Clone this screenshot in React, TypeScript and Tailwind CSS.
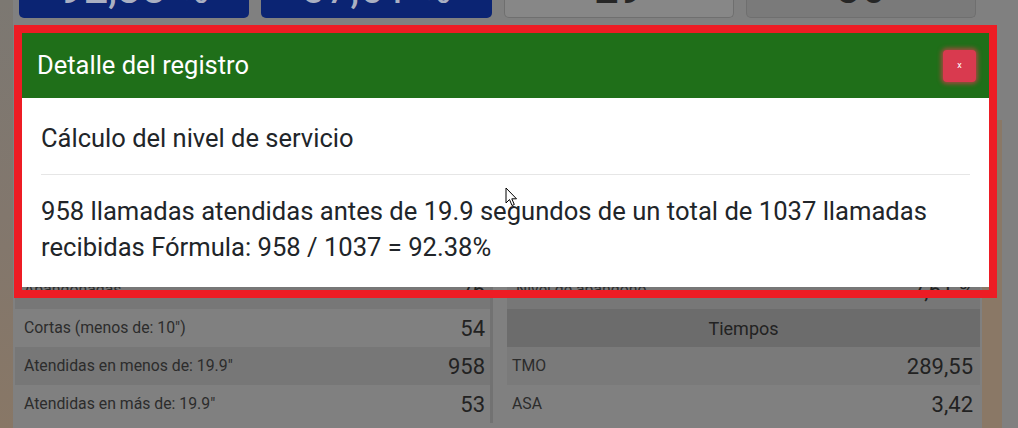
import React from 'react';

const leftRows = [
  { label: 'Recibidas', value: '1037' },
  { label: 'Atendidas', value: '1011' },
  { label: 'Atendidas (%)', value: '97,49 %' },
  { label: 'Transferidas', value: '12' },
  { label: 'En cola', value: '0' },
  { label: 'Abandonadas', value: '76' },
  { label: 'Cortas (menos de: 10")', value: '54' },
  { label: 'Atendidas en menos de: 19.9"', value: '958' },
  { label: 'Atendidas en más de: 19.9"', value: '53' },
];

const rightRows = [
  { label: 'Nivel de servicio', value: '92,38 %' },
  { label: 'Nivel de atención', value: '97,49 %' },
  { label: 'Llamadas perdidas', value: '26' },
  { label: 'Llamadas cortas', value: '54' },
  { label: 'Reintentos', value: '3' },
  { label: 'Nivel de abandono', value: '7,61 %' },
];

const rowBg = ['bg-[#808080]', 'bg-[#777777]'];

function Row({ label, value, index }: { label: string; value: string; index: number }) {
  return (
    <div className={`flex h-[38px] items-center justify-between pl-[9px] pr-[5px] ${rowBg[index % 2]}`}>
      <span className="text-[15.8px] text-[#2c2c2c]">{label}</span>
      <span className="text-[22px] text-[#222222]">{value}</span>
    </div>
  );
}

export default function App() {
  return (
    <div className="relative flex h-[428px] w-[1018px] overflow-hidden bg-[#808080] font-['Roboto',sans-serif]">
      {/* background page, dimmed by the modal */}
      <div className="w-[13px] shrink-0 bg-gradient-to-b from-[#7c7872] via-[#82776d] to-[#887766]" />
      <div className="w-[969px] shrink-0 bg-[#808080]">
        <div className="grid grid-cols-4 gap-[12px] px-[6px]">
          <div className="h-[18px] overflow-hidden rounded-b-[5px] bg-[#0b2473] text-center">
            <div className="-mt-[34px] text-[44px] leading-none text-[#aab0c2]">92,38 %</div>
          </div>
          <div className="h-[18px] overflow-hidden rounded-b-[5px] bg-[#0b2473] text-center">
            <div className="-mt-[34px] text-[44px] leading-none text-[#aab0c2]">07,61 %</div>
          </div>
          <div className="h-[18px] overflow-hidden rounded-b-[5px] border border-t-0 border-[#6f6f6f] bg-[#878787] text-center">
            <div className="-mt-[34px] text-[44px] leading-none text-[#262626]">29</div>
          </div>
          <div className="h-[18px] overflow-hidden rounded-b-[5px] border border-t-0 border-[#6f6f6f] bg-[#7a7a7a] text-center">
            <div className="-mt-[34px] text-[44px] leading-none text-[#262626]">36</div>
          </div>
        </div>

        <div className="mt-[25px] grid grid-cols-[478px_1fr] gap-[14px] px-[2px]">
          <div className="border-r-[3px] border-[#727272]">
            <div className="flex h-[38px] items-center justify-center bg-[#6c6c6c] text-[18px] text-[#222222]">
              Llamadas
            </div>
            {leftRows.map((r, i) => (
              <Row key={r.label} label={r.label} value={r.value} index={i} />
            ))}
          </div>
          <div>
            <div className="flex h-[38px] items-center justify-center bg-[#6c6c6c] text-[18px] text-[#222222]">
              Niveles
            </div>
            {rightRows.map((r, i) => (
              <Row key={r.label} label={r.label} value={r.value} index={i} />
            ))}
            <div className="flex h-[38px] items-center justify-center bg-[#6c6c6c] text-[18px] text-[#222222]">
              Tiempos
            </div>
            <div className="flex h-[38px] items-center justify-between bg-[#7a7a7a] pl-[5px] pr-[7px]">
              <span className="text-[15.8px] text-[#2c2c2c]">TMO</span>
              <span className="text-[22px] text-[#222222]">289,55</span>
            </div>
            <div className="flex h-[38px] items-center justify-between bg-[#808080] pl-[5px] pr-[7px]">
              <span className="text-[15.8px] text-[#2c2c2c]">ASA</span>
              <span className="text-[22px] text-[#222222]">3,42</span>
            </div>
          </div>
        </div>
      </div>
      <div className="flex w-[36px] shrink-0">
        <div className="mt-[120px] w-[20px] bg-[#8a7866]" />
        <div className="flex-1 bg-[#808080]" />
      </div>

      {/* red highlight frame */}
      <div className="absolute left-[14px] top-[25px] h-[273px] w-[983px] border-[8px] border-[#ed1c24]" />

      {/* modal */}
      <div className="absolute left-[22px] top-[33px] w-[967px] bg-white">
        <div className="flex h-[65px] items-center justify-between bg-[#1f6f19] pl-[15px] pr-[13px]">
          <h4 className="text-[25.5px] leading-[33px] text-white">Detalle del registro</h4>
          <button className="flex h-[32px] w-[33px] items-center justify-center rounded-[4px] bg-[#d93a4f] text-[9px] leading-none text-white shadow-[0_0_4px_2px_rgba(217,58,79,0.7)]">
            x
          </button>
        </div>
        <div className="pl-[19px] pr-[19px] pb-[22px] pt-[24px] text-[#212529]">
          <h5 className="text-[25.5px] leading-[33px]">Cálculo del nivel de servicio</h5>
          <hr className="mt-[19px] border-[#e6e6e6]" />
          <p className="pt-[18px] text-[25.6px] leading-[36px]">
            958 llamadas atendidas antes de 19.9 segundos de un total de 1037 llamadas recibidas Fórmula: 958 / 1037 = 92.38%
          </p>
        </div>
      </div>

      {/* mouse pointer */}
      <svg className="absolute left-[505px] top-[187px]" width="13" height="20" viewBox="0 0 13 20">
        <path d="M1 1 L1 16 L4.5 12.5 L7 18.5 L9.3 17.5 L6.8 11.8 L11.5 11.8 Z" fill="white" stroke="black" strokeWidth="1" />
      </svg>
    </div>
  );
}
